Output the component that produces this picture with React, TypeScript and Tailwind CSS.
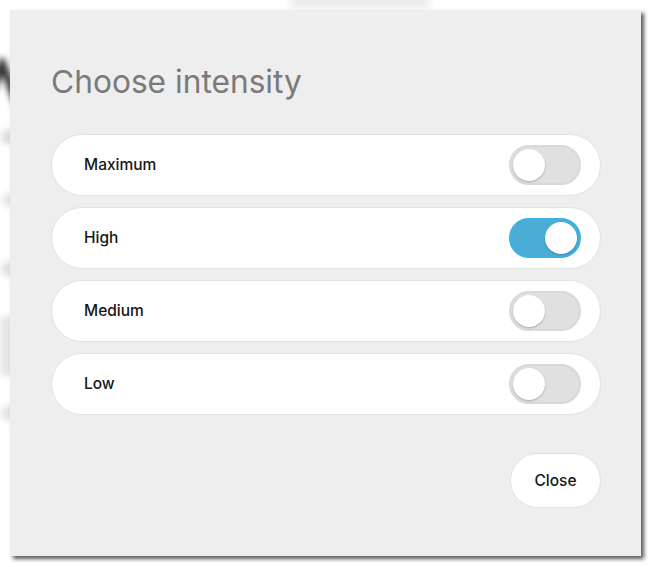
import { useState } from "react";

const levels = ["Maximum", "High", "Medium", "Low"];

function Toggle({ on, onClick }: { on: boolean; onClick: () => void }) {
  return (
    <button
      onClick={onClick}
      className={`relative flex h-[40px] w-[72px] items-center rounded-full border-2 px-[2px] ${
        on ? "justify-end border-[#3cb2e2] bg-[#4badd6]" : "justify-start border-[#d9d9d9] bg-[#e0e0e0]"
      }`}
    >
      <span className="h-[32px] w-[32px] rounded-full bg-white shadow-[0_1px_2px_rgba(0,0,0,0.25)]" />
    </button>
  );
}

export default function App() {
  const [active, setActive] = useState("High");

  return (
    <div className="relative h-[567px] w-[652px] overflow-hidden bg-white font-['Inter',sans-serif]">
      {/* Blurred page behind the dialog */}
      <div className="absolute inset-0 blur-[3px]">
        <svg width="40" height="50" viewBox="0 0 40 50" className="ml-[-18px] mt-[58px]">
          <path d="M4 46 L20 6 L36 46" fill="none" stroke="#333" strokeWidth="8" />
        </svg>
        <div className="ml-[2px] mt-[22px] h-[14px] w-[60px] rounded bg-[#dcdcdc]" />
        <div className="ml-[2px] mt-[50px] h-[12px] w-[60px] rounded bg-[#e4e4e4]" />
        <div className="ml-[2px] mt-[56px] h-[14px] w-[60px] rounded bg-[#e0e0e0]" />
        <div className="mt-[40px] h-[60px] w-[40px] bg-[#e6e6e6]" />
        <div className="ml-[2px] mt-[30px] h-[14px] w-[60px] rounded bg-[#e2e2e2]" />
      </div>
      <div className="absolute left-[290px] top-[-4px] h-[12px] w-[140px] rounded bg-[#ececec] blur-[3px]" />

      {/* Dialog */}
      <div className="absolute left-[10px] top-[10px] flex h-[546px] w-[631px] flex-col bg-[#eeeeee] pl-[41px] pr-[40px] shadow-[3px_3px_4px_rgba(0,0,0,0.65)]">
        <h2 className="mt-[52px] text-[31.7px] font-normal leading-[40px] text-[#7a7a7a]">Choose intensity</h2>
        <div className="mt-[32px] flex flex-col gap-[11px]">
          {levels.map((l) => (
            <div
              key={l}
              className="flex h-[62px] items-center justify-between rounded-full border border-[#e2e2e2] bg-white pl-[32px] pr-[19px]"
            >
              <span className="text-[15.5px] font-medium text-[#161616]">{l}</span>
              <Toggle on={active === l} onClick={() => setActive(l)} />
            </div>
          ))}
        </div>
        <div className="mt-[38px] flex justify-end">
          <button className="h-[55px] w-[91px] rounded-full border border-[#e2e2e2] bg-white text-[15.5px] font-medium text-[#161616]">
            Close
          </button>
        </div>
      </div>
    </div>
  );
}
